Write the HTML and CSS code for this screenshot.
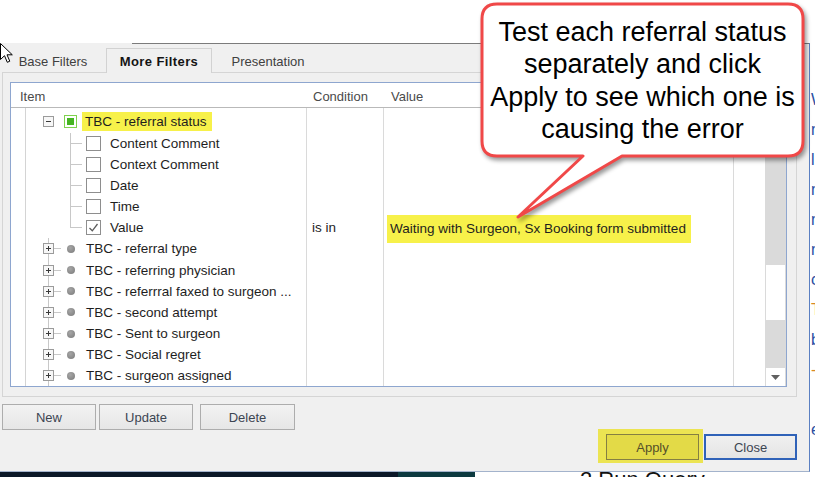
FILE: index.html
```html
<!DOCTYPE html>
<html lang="en">
<head>
<meta charset="utf-8">
<title>Filters</title>
<link rel="stylesheet" href="styles.css">
</head>
<body>
<div class="screen">
  <div class="desk-top"></div>
  <div class="main">
    <div class="dialog">
      <div class="frame-edge"></div>
      <div class="tabs">
        <div class="tab tab-base">Base Filters</div>
        <div class="tab active">More Filters</div>
        <div class="tab tab-pres">Presentation</div>
      </div>
      <div class="page">
        <div class="list">
          <div class="table">
            <div class="head">
              <div class="hc hc-item">Item</div>
              <div class="hc hc-cond">Condition</div>
              <div class="hc hc-val">Value</div>
              <div class="hc"></div>
            </div>
            <div class="body">
              <div class="row">
                <div class="ic root-open">
                  <svg class="exp" width="11" height="11" viewBox="0 0 11 11"><rect x=".5" y=".5" width="10" height="10" fill="#f7f7f7" stroke="#9b9b9b"/><path d="M3 5.5h5" stroke="#3a3a3a"/></svg>
                  <svg class="grp" width="13" height="13" viewBox="0 0 13 13"><rect x=".5" y=".5" width="12" height="12" fill="#fff" stroke="#7fd24e"/><rect x="3" y="3" width="7" height="7" fill="#46b423"/></svg>
                  <span class="hl hl-item">TBC - referral status</span>
                </div>
                <div></div><div></div><div></div>
              </div>
              <div class="row">
                <div class="ic child"><span class="cb"></span><span class="lbl-child">Content Comment</span></div>
                <div></div><div></div><div></div>
              </div>
              <div class="row">
                <div class="ic child"><span class="cb"></span><span class="lbl-child">Context Comment</span></div>
                <div></div><div></div><div></div>
              </div>
              <div class="row">
                <div class="ic child"><span class="cb"></span><span class="lbl-child">Date</span></div>
                <div></div><div></div><div></div>
              </div>
              <div class="row">
                <div class="ic child"><span class="cb"></span><span class="lbl-child">Time</span></div>
                <div></div><div></div><div></div>
              </div>
              <div class="row">
                <div class="ic child last"><span class="cb"><svg width="13" height="13" viewBox="0 0 13 13"><path d="M2.5 7l2.8 2.8L10.5 3" fill="none" stroke="#5c5c5c" stroke-width="1.3"/></svg></span><span class="lbl-child">Value</span></div>
                <div class="cc">is in</div>
                <div class="vc"><span class="hl hl-val">Waiting with Surgeon, Sx Booking form submitted</span></div>
                <div></div>
              </div>
              <div class="row">
                <div class="ic root"><svg class="exp" width="11" height="11" viewBox="0 0 11 11"><rect x=".5" y=".5" width="10" height="10" fill="#f7f7f7" stroke="#9b9b9b"/><path d="M3 5.5h5M5.5 3v5" stroke="#3a3a3a"/></svg><span class="dot"></span><span class="lbl">TBC - referral type</span></div>
                <div></div><div></div><div></div>
              </div>
              <div class="row">
                <div class="ic root"><svg class="exp" width="11" height="11" viewBox="0 0 11 11"><rect x=".5" y=".5" width="10" height="10" fill="#f7f7f7" stroke="#9b9b9b"/><path d="M3 5.5h5M5.5 3v5" stroke="#3a3a3a"/></svg><span class="dot"></span><span class="lbl">TBC - referring physician</span></div>
                <div></div><div></div><div></div>
              </div>
              <div class="row">
                <div class="ic root"><svg class="exp" width="11" height="11" viewBox="0 0 11 11"><rect x=".5" y=".5" width="10" height="10" fill="#f7f7f7" stroke="#9b9b9b"/><path d="M3 5.5h5M5.5 3v5" stroke="#3a3a3a"/></svg><span class="dot"></span><span class="lbl">TBC - referrral faxed to surgeon ...</span></div>
                <div></div><div></div><div></div>
              </div>
              <div class="row">
                <div class="ic root"><svg class="exp" width="11" height="11" viewBox="0 0 11 11"><rect x=".5" y=".5" width="10" height="10" fill="#f7f7f7" stroke="#9b9b9b"/><path d="M3 5.5h5M5.5 3v5" stroke="#3a3a3a"/></svg><span class="dot"></span><span class="lbl">TBC - second attempt</span></div>
                <div></div><div></div><div></div>
              </div>
              <div class="row">
                <div class="ic root"><svg class="exp" width="11" height="11" viewBox="0 0 11 11"><rect x=".5" y=".5" width="10" height="10" fill="#f7f7f7" stroke="#9b9b9b"/><path d="M3 5.5h5M5.5 3v5" stroke="#3a3a3a"/></svg><span class="dot"></span><span class="lbl">TBC - Sent to surgeon</span></div>
                <div></div><div></div><div></div>
              </div>
              <div class="row">
                <div class="ic root"><svg class="exp" width="11" height="11" viewBox="0 0 11 11"><rect x=".5" y=".5" width="10" height="10" fill="#f7f7f7" stroke="#9b9b9b"/><path d="M3 5.5h5M5.5 3v5" stroke="#3a3a3a"/></svg><span class="dot"></span><span class="lbl">TBC - Social regret</span></div>
                <div></div><div></div><div></div>
              </div>
              <div class="row">
                <div class="ic root"><svg class="exp" width="11" height="11" viewBox="0 0 11 11"><rect x=".5" y=".5" width="10" height="10" fill="#f7f7f7" stroke="#9b9b9b"/><path d="M3 5.5h5M5.5 3v5" stroke="#3a3a3a"/></svg><span class="dot"></span><span class="lbl">TBC - surgeon assigned</span></div>
                <div></div><div></div><div></div>
              </div>
            </div>
          </div>
          <div class="vscroll">
            <div class="sb-btn"><svg width="9" height="5" viewBox="0 0 9 5"><path d="M0 5L4.5 0L9 5Z" fill="#606060"/></svg></div>
            <div class="sb-track-a"></div>
            <div class="sb-thumb"></div>
            <div class="sb-track-b"></div>
            <div class="sb-btn"><svg width="9" height="5" viewBox="0 0 9 5"><path d="M0 0L4.5 5L9 0Z" fill="#606060"/></svg></div>
          </div>
        </div>
      </div>
      <div class="edit-row">
        <button class="btn btn-new">New</button>
        <button class="btn btn-update">Update</button>
        <button class="btn btn-delete">Delete</button>
      </div>
      <div class="dialog-row">
        <span class="mark"><button class="btn btn-apply">Apply</button></span>
        <button class="btn btn-close">Close</button>
      </div>
    </div>
    <div class="side">
      <span class="g">W</span>
      <span class="g">n</span>
      <span class="g">l</span>
      <span class="g">n</span>
      <span class="g">n</span>
      <span class="g">n</span>
      <span class="g">c</span>
      <span class="g o">T</span>
      <span class="g">b</span>
      <span class="g o">-</span>
      <span class="g"></span>
      <span class="g">e</span>
    </div>
  </div>
  <div class="taskbar">
    <div class="tb-dark"></div>
    <div class="tb-teal"></div>
    <div class="tb-doc"><span class="tb-text">2 Run Query</span></div>
  </div>

  <div class="callout">
    <svg class="bubble" width="334" height="224" viewBox="0 0 334 224">
      <path d="M19 4H310Q325 4 325 19V141Q325 156 310 156H144L40 217L105 156H19Q4 156 4 141V19Q4 4 19 4Z" fill="#fff" stroke="#f04848" stroke-width="3" stroke-linejoin="round"/>
    </svg>
    <div class="bubble-text">Test each referral status<br>separately and click<br>Apply to see which one is<br>causing the error</div>
  </div>

  <svg class="cursor" width="14" height="21" viewBox="0 0 14 21">
    <path d="M0.5 0.5V16.5L4.5 12.7L7.3 19.3L9.8 18.2L7 11.8H12.3Z" fill="#fff" stroke="#000" stroke-width="1" stroke-linejoin="round"/>
  </svg>
</div>
</body>
</html>
```

FILE: styles.css
```css
* { box-sizing: border-box; }

html, body { margin: 0; padding: 0; }

body {
  width: 815px;
  height: 477px;
  overflow: hidden;
  background: #fff;
  font-family: "Liberation Sans", Arial, sans-serif;
  font-size: 13px;
  color: #1e1e1e;
}

.screen {
  position: relative;
  width: 815px;
  height: 477px;
  overflow: hidden;
  display: flex;
  flex-direction: column;
}

.desk-top { height: 43px; flex: none; }

.main { display: flex; height: 429px; flex: none; }

/* dialog window */
.dialog {
  width: 810px;
  height: 429px;
  flex: none;
  background: #f0f0f0;
  border-right: 1px solid #5b80c2;
  border-bottom: 1px solid #a3b3cc;
  display: flex;
  flex-direction: column;
}

.frame-edge { height: 1px; margin-left: 132px; background: #7b7b7b; flex: none; }

/* tab strip */
.tabs {
  height: 29px;
  flex: none;
  display: flex;
  align-items: flex-end;
  position: relative;
  z-index: 1;
}

.tab {
  height: 25px;
  display: flex;
  align-items: center;
  justify-content: center;
  color: #404040;
  padding-top: 1px;
}

.tab-base { width: 98px; margin-left: 4px; }

.tab.active {
  width: 106px;
  margin-left: 4px;
  background: #f0f0f0;
  border: 1px solid #d2d2d2;
  border-bottom: none;
  font-weight: bold;
  color: #141414;
  letter-spacing: 0.4px;
}

.tab-pres { width: 108px; margin-left: 2px; }

.page {
  margin: -1px 0 0 2px;
  width: 795px;
  height: 325px;
  flex: none;
  border: 1px solid #d5d5d5;
  padding: 9px 9px 9px 7px;
}

/* tree list */
.list {
  display: flex;
  height: 305px;
  border: 1px solid #8ea6cf;
  background: #fff;
}

.table { width: 754px; display: flex; flex-direction: column; }

.head {
  height: 25px;
  flex: none;
  border-bottom: 1px solid #b9b9b9;
  display: grid;
  grid-template-columns: 295px 77px 350px 32px;
  color: #4a4a4a;
}

.hc { display: flex; align-items: center; padding-top: 3px; }
.hc-item { padding-left: 9px; }
.hc-cond { padding-left: 7px; }
.hc-val { padding-left: 8px; }

.body {
  flex: 1;
  overflow: hidden;
  padding-top: 3.4px;
  font-size: 13.5px;
  background:
    linear-gradient(#d4d4d4, #d4d4d4) 14px 0 / 1px 100% no-repeat,
    linear-gradient(#dadada, #dadada) 295px 0 / 1px 100% no-repeat,
    linear-gradient(#dadada, #dadada) 372px 0 / 1px 100% no-repeat,
    linear-gradient(#dadada, #dadada) 722px 0 / 1px 100% no-repeat;
}

.row {
  height: 21.17px;
  display: grid;
  grid-template-columns: 295px 77px 350px 32px;
  grid-template-rows: 21.17px;
}

.ic { display: flex; align-items: center; height: 100%; white-space: nowrap; }

.root-open { padding-left: 32px; }
.root-open .grp { margin-left: 10px; flex: none; }

.root {
  padding-left: 32px;
  background:
    linear-gradient(#c8c8c8, #c8c8c8) 37px 0 / 1px 100% no-repeat,
    linear-gradient(#c8c8c8, #c8c8c8) 43px 50% / 7px 1px no-repeat;
}

.exp { display: block; flex: none; position: relative; }

.dot {
  width: 8px;
  height: 8px;
  margin-left: 13px;
  border-radius: 50%;
  background: radial-gradient(circle at 40% 35%, #a6a6a6, #7a7a7a);
  flex: none;
}

.lbl { margin-left: 11px; }

.child {
  padding-left: 75px;
  background:
    linear-gradient(#c8c8c8, #c8c8c8) 59px 0 / 1px 100% no-repeat,
    linear-gradient(#c8c8c8, #c8c8c8) 59px 50% / 12px 1px no-repeat;
}

.child.last {
  background:
    linear-gradient(#c8c8c8, #c8c8c8) 59px 0 / 1px 50% no-repeat,
    linear-gradient(#c8c8c8, #c8c8c8) 59px 50% / 12px 1px no-repeat;
}

.cb {
  width: 15px;
  height: 15px;
  flex: none;
  border: 1px solid #8e8e8e;
  background: #fff;
  display: flex;
}

.lbl-child { margin-left: 9px; }

.hl { background: #f7f14a; display: flex; align-items: center; white-space: nowrap; }
.hl-item { margin-left: 5px; width: 130px; height: 19px; padding-left: 3px; }

.cc { display: flex; align-items: center; padding-left: 6px; height: 100%; }
.vc { display: flex; align-items: center; padding-left: 4px; height: 100%; }
.hl-val { width: 304px; height: 28px; padding: 0 0 1px 3px; flex: none; position: relative; top: 1px; }

/* vertical scrollbar */
.vscroll {
  width: 21px;
  display: flex;
  flex-direction: column;
  background: #dadada;
  padding: 0 1px;
}

.sb-btn {
  height: 18px;
  flex: none;
  background: #fff;
  display: flex;
  align-items: center;
  justify-content: center;
}

.sb-track-a { height: 164px; flex: none; }
.sb-thumb { height: 55px; flex: none; background: #fff; }
.sb-track-b { flex: 1; }

/* buttons */
.btn {
  height: 26px;
  padding: 0;
  border: 1px solid #adadad;
  background: linear-gradient(#f2f2f2, #e6e6e6);
  font: inherit;
  color: #3c4552;
  display: flex;
  align-items: center;
  justify-content: center;
}

.edit-row { display: flex; margin-top: 7px; padding-left: 2px; height: 26px; flex: none; }
.btn-new { width: 94px; }
.btn-update { width: 94px; margin-left: 3px; }
.btn-delete { width: 95px; margin-left: 7px; }

.dialog-row {
  display: flex;
  justify-content: flex-end;
  align-items: flex-start;
  margin-top: -1px;
  padding-right: 12px;
  flex: none;
}

.mark { background: #ece452; padding: 5px 4px 3px 8px; display: flex; }

.btn-apply {
  width: 93px;
  background: #e3da47;
  border-color: #857f42;
  color: #55502a;
}

.btn-close {
  width: 93px;
  margin: 5px 0 0 1px;
  border: 2px solid #2f62b8;
  background: linear-gradient(#f0f0f0, #e4e4e4);
}

/* window behind, at the right edge */
.side {
  flex: 1;
  overflow: hidden;
  padding: 42px 0 0 1px;
  display: flex;
  flex-direction: column;
  color: #2a4fa3;
  font-size: 16px;
}

.g { height: 30px; line-height: 30px; flex: none; }
.g.o { color: #d98a23; }

/* taskbar strip */
.taskbar { height: 5px; flex: none; display: flex; overflow: hidden; }
.tb-dark { width: 398px; background: #0b1828; }
.tb-teal { width: 77px; background: #0c3a40; }
.tb-doc { flex: 1; background: #fff; padding-left: 105px; overflow: hidden; }
.tb-text {
  display: block;
  font-size: 22px;
  line-height: 22px;
  margin-top: -3px;
  color: #111;
  white-space: nowrap;
}

/* annotation bubble */
.callout {
  position: absolute;
  left: 478px;
  top: 0;
  width: 334px;
  height: 224px;
  z-index: 5;
}

.bubble {
  display: block;
  filter: drop-shadow(2px 3px 2px rgba(0, 0, 0, 0.4));
}

.bubble-text {
  position: absolute;
  left: 4px;
  top: 16px;
  width: 321px;
  text-align: center;
  font-size: 27px;
  line-height: 32.4px;
  color: #000;
}

.cursor {
  position: absolute;
  left: 0;
  top: 43px;
  z-index: 6;
}
```
